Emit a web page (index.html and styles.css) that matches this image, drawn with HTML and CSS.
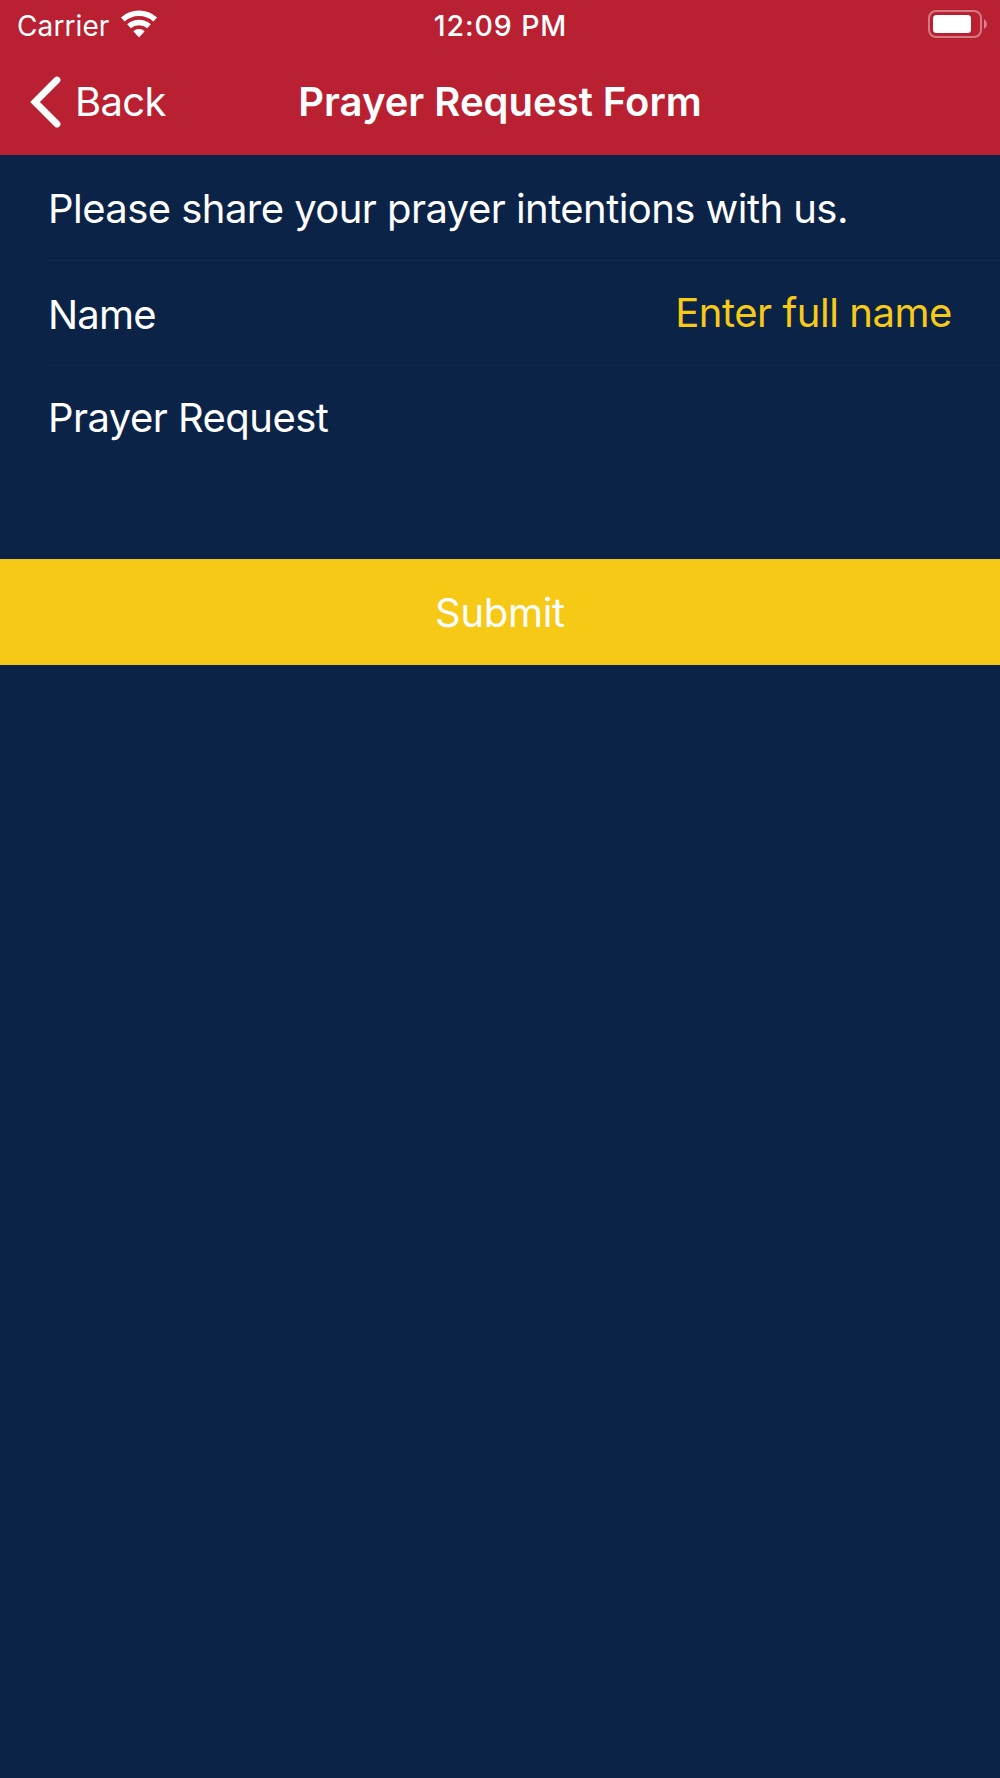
FILE: index.html
```
<!DOCTYPE html>
<html lang="en">
<head>
    <meta charset="UTF-8">
    <meta name="viewport" content="width=device-width, initial-scale=1.0">
    <title>Prayer Request Form</title>
    <link rel="stylesheet" href="styles.css">
</head>

<body>
    <header>
        <div class="status-bar">
            <div class="carrier">
                <span>Carrier</span>
                <svg class="wifi" width="38" height="28" viewBox="0 0 38 28">
                    <path d="M2.8 9.5a24.25 24.25 0 0 1 32.4 0" fill="none" stroke="#fff" stroke-width="5.5"/>
                    <path d="M9 16.35a15 15 0 0 1 20 0" fill="none" stroke="#fff" stroke-width="5.4"/>
                    <path d="M13.3 21.2a8.5 8.5 0 0 1 11.4 0L19 27.5z" fill="#fff"/>
                </svg>
            </div>
            <span class="time">12:09 PM</span>
            <svg class="battery" width="60" height="28" viewBox="0 0 60 28">
                <rect x="1" y="1" width="52" height="26" rx="7" fill="none" stroke="#fff" stroke-opacity=".4" stroke-width="2"/>
                <rect x="5" y="5" width="38" height="18" rx="3.5" fill="#fff"/>
                <path d="M56 9q3 2 3 5t-3 5z" fill="#fff" fill-opacity=".45"/>
            </svg>
        </div>
        <nav class="nav-bar">
            <a class="back">
                <svg width="32" height="52" viewBox="0 0 32 52">
                    <path d="M27 4L5 26l22 22" fill="none" stroke="#fff" stroke-width="6.8" stroke-linecap="round"/>
                </svg>
                <span>Back</span>
            </a>
            <h1>Prayer Request Form</h1>
        </nav>
    </header>

    <form>
        <p class="row intro"><span>Please share your prayer intentions with us.</span></p>
        <div class="row name">
            <label for="name">Name</label>
            <input id="name" type="text" placeholder="Enter full name">
        </div>
        <div class="row request">
            <label>Prayer Request</label>
        </div>
        <button type="button">Submit</button>
    </form>
</body>
</html>
```

FILE: styles.css
```
body {
    margin: 0;
    min-height: 1778px;
    background-color: #0b2347;
    color: #fff;
    font-family: Inter, sans-serif;
    font-size: 40px;
}

header {
    height: 155px;
    background-color: #b92031;
}

.status-bar {
    display: grid;
    grid-template-columns: 1fr auto 1fr;
    align-items: center;
    height: 50px;
    padding: 0 12px 0 16px;
    font-size: 28px;
}

.carrier {
    display: flex;
    align-items: center;
    gap: 11px;
    padding: 1px 0 0 1px;
    letter-spacing: 0.1px;
}

.wifi {
    margin-bottom: 3px;
}

.time {
    margin-right: 3px;
    font-size: 28.5px;
    font-weight: 550;
    letter-spacing: 0.9px;
}

.battery {
    justify-self: end;
    margin-bottom: 2px;
}

.nav-bar {
    display: grid;
    grid-template-columns: 1fr auto 1fr;
    align-items: center;
    height: 103px;
    padding: 0 30px;
}

.back {
    display: flex;
    align-items: center;
    gap: 13px;
    letter-spacing: -0.7px;
}

h1 {
    margin: 0;
    font-size: 40px;
    font-weight: 600;
}

.row {
    display: flex;
    align-items: center;
    justify-content: space-between;
    box-sizing: border-box;
    height: 106px;
    margin: 0 0 0 48px;
    padding: 0 48px 0 0;
    border-bottom: 1px solid #112849;
    letter-spacing: -0.55px;
}

.intro {
    padding-top: 2px;
}

.name {
    height: 105px;
}

.name label {
    padding-top: 2px;
    letter-spacing: -0.8px;
}

.request {
    align-items: flex-start;
    height: 193px;
    padding-top: 27px;
    border-bottom: none;
}

input {
    width: 400px;
    padding: 0 0 2px;
    border: none;
    outline: none;
    background: none;
    color: #f8ca18;
    font: inherit;
    letter-spacing: -0.45px;
    text-align: right;
}

input::placeholder {
    color: #f8ca18;
}

button {
    display: block;
    width: 100%;
    height: 106px;
    padding: 0;
    border: none;
    background-color: #f7c917;
    color: #fff;
    font: inherit;
    letter-spacing: -0.3px;
}
```
